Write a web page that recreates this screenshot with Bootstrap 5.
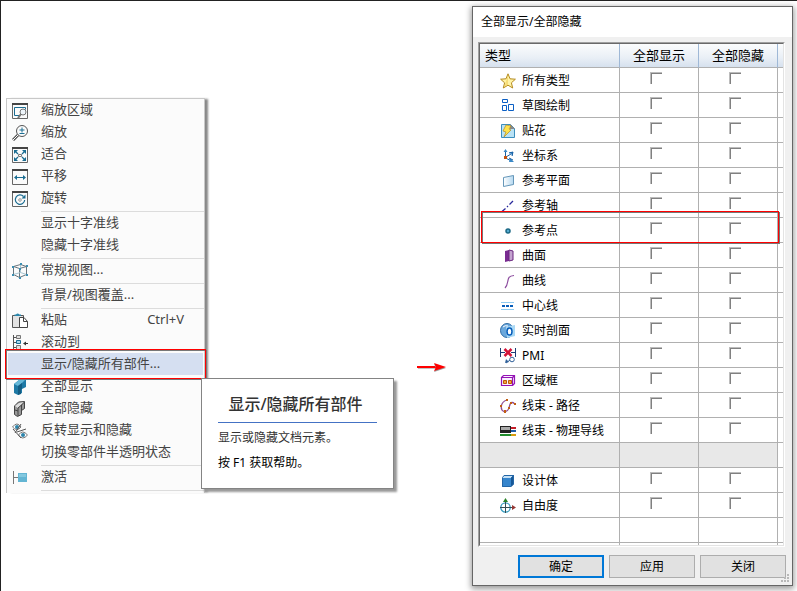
<!DOCTYPE html>
<html lang="zh-CN">
<head>
<meta charset="utf-8">
<meta name="viewport" content="width=device-width, initial-scale=1">
<title>全部显示/全部隐藏</title>
<link rel="stylesheet" href="https://cdn.jsdelivr.net/npm/bootstrap@5.3.0/dist/css/bootstrap.min.css">
<style>
body{font-family:"Noto Sans","Noto Sans CJK SC",sans-serif;font-size:12px;line-height:20px;color:#000;background:#fff;border-top:1px solid #222;border-left:1px solid #222;min-height:100vh}
svg{display:block;flex:none}
.stage{display:grid;grid-template-columns:minmax(199px,199fr) 267fr minmax(321px,321fr);align-items:start;padding:5px 4px 5px 5px}
/* context menu */
.ctx{margin-top:92px;background:#fbfbfb;border:1px solid #c8c8c8;border-bottom:0;padding-bottom:2px;box-shadow:4px 0 2px -1px #888}
.ctx-item{display:flex;align-items:center;width:100%;height:22px;border:0;background:none;padding:0 20px 2px 5px;font-size:13px;line-height:22px;color:#444;text-align:left;white-space:nowrap}
.ctx-item svg{margin-top:3px}
.ctx-icon{width:16px;margin-right:13px;flex:none}
.ctx-sep{height:1px;margin:2px 0 0 34px;background:#dcdcdc}
.ctx-on{background:linear-gradient(#d5dff1,#d5dff1) 1px 0/calc(100% - 2px) 100% no-repeat}
.ctx-on::after,.row-frame td:first-child::after{content:"";position:absolute;border:1px solid #f00;box-shadow:1px 1px 0 #777,inset 1px 1px 0 #777;pointer-events:none}
.ctx-on::after{top:-4px;bottom:-4px;left:-2px;right:-2px}
.tip{position:absolute;z-index:5;left:calc(100% - 3px);top:25px;width:193px;height:111px;background:#fff;border:1px solid #848484;box-shadow:3px 3px 2px #999;padding:11px 16px 0}
.tip-head{font-size:16px;line-height:28px;font-weight:500;color:#333;text-align:center;padding:0 4px 4px 0;border-bottom:1px solid #4472c4;margin:0 0 5px;white-space:nowrap}
.tip p{margin:0 0 5px;line-height:20px;white-space:nowrap}
.tip-text{color:#333}
.flow-arrow{padding:354px 25px 0 0}
/* dialog */
.dlg{background:#f0f0f0;border:1px solid #666;box-shadow:0 2px 6px 1px rgba(0,0,0,.4)}
.dlg-title{height:30px;background:#fff;padding:5px 8px;font-size:12px;line-height:20px;margin:0;font-weight:400}
.well-out{margin:5px 7px 8px 5px;border:1px solid;border-color:#a0a0a0 #fff #fff #a0a0a0}
.well-in{border:1px solid;border-color:#696969 #e3e3e3 #e3e3e3 #696969;background:#fff}
.types{width:100%;table-layout:fixed;border-collapse:separate;border-spacing:0}
.types th,.types td{height:25px;padding:0;border:0 solid #b0b0b0;border-width:0 1px 1px 0}
.types th:last-child,.types td:last-child{border-right:0}
.types th{height:24px;padding-bottom:2px;font-size:13px;line-height:20px;font-weight:400;background:linear-gradient(#fbfcfd,#e9eff6 60%,#d6e1ee);border-right-color:#9fb8d6}
.types th:first-child{padding-left:5px}
.types .kind{display:flex;align-items:center;gap:6px;padding:2px 0 0 20px;height:24px;white-space:nowrap}
.types .blank td:not(:last-child){background:#e8e8e8}
.types .sliver td{height:2px;border-bottom:0}
.c-check{width:79px}.c-end{width:5px}
.types .pick{text-align:center;padding-right:6px;line-height:0;vertical-align:top;padding-top:4px}
.tick{appearance:none;width:12px;height:12px;margin:0;border:0;background:#fff;border-top:1px solid #bcbcbc;border-left:1px solid #bcbcbc;box-shadow:inset 1px 1px 0 #808080;vertical-align:top}
.row-frame{position:relative}
.row-frame td:first-child::after{top:-7px;left:1px;right:4px;bottom:0}
.dlg-foot{position:relative;padding:0 6px 7px;gap:5px}
.dlg-btn{width:86px;height:23px;border:1px solid #adadad;background:#e1e1e1;padding:0;font-size:12px;line-height:20px;color:#000}
.dlg-btn.main-btn{border:2px solid #0078d7;line-height:18px}
.grip{position:absolute;right:3px;bottom:2px}
</style>
<script defer src="https://cdn.jsdelivr.net/npm/bootstrap@5.3.0/dist/js/bootstrap.bundle.min.js"></script>
</head>
<body>
<main class="stage">
<ul class="ctx list-unstyled mb-0">
<li><button class="ctx-item"><span class="ctx-icon"><svg width="16" height="16" viewBox="0 0 16 16" fill="none"><path d="M.5 1v14.500h15V1" stroke="#666"/><path d="M0 1h16" stroke="#444" stroke-width="2"/><path d="M8 12.500H2.500v-8h11v2" stroke="#1b6d92"/><circle cx="11" cy="9" r="3" fill="#eef5fa" stroke="#777"/><path d="m9 11-3 4" stroke="#777" stroke-width="2"/></svg></span>缩放区域</button></li>
<li><button class="ctx-item"><span class="ctx-icon"><svg width="16" height="16" viewBox="0 0 16 16" fill="none"><circle cx="10" cy="6" r="5.500" stroke="#555"/><path d="m6 10-5 5" stroke="#555" stroke-width="3"/><path d="m6 10-5 5" stroke="#fff"/><path d="M10 2.500v5M7.500 5h5M7.500 8.500h5" stroke="#1b6d92"/></svg></span>缩放</button></li>
<li><button class="ctx-item"><span class="ctx-icon"><svg width="16" height="16" viewBox="0 0 16 16" fill="none"><path d="M.5 1v14.500h15V1" stroke="#666"/><path d="M0 1h16" stroke="#444" stroke-width="2"/><path d="m3 4 3 3m7-3-3 3m-7 6 3-3m7 3-3-3" stroke="#1b6d92" stroke-width="1.300"/><path d="M2 3h4L2 7zM14 3v4l-4-4zM2 14v-4l4 4zM14 14h-4l4-4z" fill="#1b6d92"/><path d="M6.500 7.500h3v2h-3z" stroke="#777"/></svg></span>适合</button></li>
<li><button class="ctx-item"><span class="ctx-icon"><svg width="16" height="16" viewBox="0 0 16 16" fill="none"><path d="M.5 1v14.500h15V1" stroke="#666"/><path d="M0 1h16" stroke="#444" stroke-width="2"/><path d="M4 8.500h8" stroke="#1b6d92"/><path d="M2 8.500 5 6v5zM14 8.500 11 6v5z" fill="#1b6d92"/></svg></span>平移</button></li>
<li><button class="ctx-item"><span class="ctx-icon"><svg width="16" height="16" viewBox="0 0 16 16" fill="none"><path d="M.5 1v14.500h15V1" stroke="#666"/><path d="M0 1h16" stroke="#444" stroke-width="2"/><path d="M11.500 5.500A4.700 4.700 0 1 0 12.700 9" stroke="#1b6d92" stroke-width="1.200"/><path d="M13.500 3.500v4H9.500z" fill="#1b6d92"/><circle cx="8" cy="9" r="1.300" stroke="#999"/></svg></span>旋转</button></li>
<li class="ctx-sep"></li>
<li><button class="ctx-item"><span class="ctx-icon"></span>显示十字准线</button></li>
<li><button class="ctx-item"><span class="ctx-icon"></span>隐藏十字准线</button></li>
<li class="ctx-sep"></li>
<li><button class="ctx-item"><span class="ctx-icon"><svg width="16" height="16" viewBox="0 0 16 16" fill="none"><path d="m1.500 3.500 6 2 7-2v8l-7 3-6-3zM7.500 5.500v9M1.500 3.500l7-2 6 2" stroke="#68757d"/><path d="M8.500 1.500v8l-7 2m7-2 6 2" stroke="#a9c6d2"/><path d="M0 3h2v2H0zM8 0h2v2H8zM14 2h2v2h-2zM7 5h2v2H7zM0 11h2v2H0zM7 14h2v2H7zM14 11h2v2h-2z" fill="#3b8db0"/></svg></span>常规视图...</button></li>
<li class="ctx-sep"></li>
<li><button class="ctx-item"><span class="ctx-icon"></span>背景/视图覆盖...</button></li>
<li class="ctx-sep"></li>
<li><button class="ctx-item"><span class="ctx-icon"><svg width="16" height="16" viewBox="0 0 16 16" fill="none"><path d="M.5 2.500h11v12H.5z" fill="#e3e3e3" stroke="#555"/><path d="M2.500 3V1.500H4Q5.500-.5 7.500 1.500H9V3z" fill="#2b86ab"/><path d="M7.500 4.500H12l3.500 4v6h-8z" fill="#fff" stroke="#444"/><path d="M11.500 4.500v4h4" stroke="#444"/></svg></span>粘贴<span class="ms-auto">Ctrl+V</span></button></li>
<li><button class="ctx-item"><span class="ctx-icon"><svg width="16" height="16" viewBox="0 0 16 16" fill="none"><path d="M1.500 0v15M2 2.500h3m-3 5h3m-3 5h3" stroke="#555"/><path d="M4.500.500h4v3h-4zM4.500 10.500h4v4h-4z" fill="#ddd" stroke="#777"/><path d="M4.500 5.500h4v3h-4z" fill="#a8d8ed" stroke="#1b6d92"/><path d="M13 8.500h3" stroke="#333"/><path d="m11 8.500 3-2v4z" fill="#333"/></svg></span>滚动到</button></li>
<li class="ctx-on position-relative"><button class="ctx-item" aria-describedby="tip"><span class="ctx-icon"></span>显示/隐藏所有部件...</button>
<div class="tip" id="tip" role="tooltip"><h2 class="tip-head">显示/隐藏所有部件</h2><p class="tip-text">显示或隐藏文档元素。</p><p>按 F1 获取帮助。</p></div></li>
<li><button class="ctx-item"><span class="ctx-icon"><svg width="16" height="16" viewBox="0 0 16 16"><path d="m2 5 5-4 7-1v8l-4 2v4l-4 2-4-2z" fill="#1e79a5"/><path d="m2 5 5-4 7-1-4 4-4 3z" fill="#65b7d8"/><path d="m6 7 4-3v6l-1 .5V15l-3 1z" fill="#135d83"/></svg></span>全部显示</button></li>
<li><button class="ctx-item"><span class="ctx-icon"><svg width="16" height="16" viewBox="0 0 16 16"><path d="m2.500 5 4-4 6-.5v7l-3 2v4l-4 2-3-2z" fill="#999" stroke="#444"/><path d="m3 5 4-3 5-1-3 3-3 3z" fill="#ddd"/><path d="M6 7v8M6 7l3.500-3v6M3 9l3 1M9.500 4l3-3" stroke="#444" fill="none"/></svg></span>全部隐藏</button></li>
<li><button class="ctx-item"><span class="ctx-icon"><svg width="16" height="16" viewBox="0 0 16 16" fill="none"><path d="M.5 4Q5-2 9 4 5 9 .5 4zM6.500 12q4-6 9 0-5 6-9 0z" fill="#fff" stroke="#777"/><circle cx="5" cy="4" r="2" fill="#2d84aa"/><circle cx="11" cy="12" r="2" fill="#2d84aa"/><path d="m9 1-6 9m2-1 9-3M1 6l8 9" stroke="#555"/></svg></span>反转显示和隐藏</button></li>
<li><button class="ctx-item"><span class="ctx-icon"></span>切换零部件半透明状态</button></li>
<li class="ctx-sep"></li>
<li><button class="ctx-item"><span class="ctx-icon"><svg width="16" height="16" viewBox="0 0 16 16"><path d="M1.500 1v13M2 7.500h4" stroke="#777"/><path d="M6 3h9v9H6z" fill="#63b5d3"/><path d="M7 4h7v3H7z" fill="#83c8df"/></svg></span>激活</button></li>
<li class="ctx-sep"></li>
</ul>
<div class="flow-arrow d-flex justify-content-end"><svg width="30" height="14" viewBox="0 0 30 14"><path d="M1 8h20" stroke="#888"/><path d="M0 7h20" stroke="#f00" stroke-width="2"/><path d="m17 4 12 4-12 4 2-4z" fill="#999"/><path d="m17 3 12 4-12 4 2-4z" fill="#f00"/></svg></div>
<section class="dlg">
<h1 class="dlg-title">全部显示/全部隐藏</h1>
<div class="well-out"><div class="well-in">
<table class="types">
<colgroup><col><col class="c-check"><col class="c-check"><col class="c-end"></colgroup>
<thead><tr><th>类型</th><th class="text-center">全部显示</th><th class="text-center">全部隐藏</th><th></th></tr></thead>
<tbody>
<tr><td><div class="kind"><svg width="16" height="16" viewBox="0 0 16 16"><path d="m8 .8 2 5 5.400.4-4 3.600 1.300 5.200L8 12.200 3.300 15l1.300-5.200-4-3.600L6 5.800z" fill="#fff3a6" stroke="#b58b20"/><path d="M8 2v10l-4 2 1.500-4z" fill="#f0cf5c" opacity=".6"/></svg>所有类型</div></td><td class="pick"><input type="checkbox" class="tick" aria-label="所有类型 全部显示"></td><td class="pick"><input type="checkbox" class="tick" aria-label="所有类型 全部隐藏"></td><td></td></tr>
<tr><td><div class="kind"><svg width="16" height="16" viewBox="0 0 16 16" fill="none" stroke="#0b5fc4"><path d="M2.500 1.500h5v3h-5zM2.500 7.500h4v5h-4zM8.500 6.500h5v6h-5z"/></svg>草图绘制</div></td><td class="pick"><input type="checkbox" class="tick" aria-label="草图绘制 全部显示"></td><td class="pick"><input type="checkbox" class="tick" aria-label="草图绘制 全部隐藏"></td><td></td></tr>
<tr><td><div class="kind"><svg width="16" height="16" viewBox="0 0 16 16"><path d="M1.500 1.500h9l4 4v9h-13z" fill="#b9e2f5" stroke="#3c8ebd"/><path d="M10 1v5h5z" fill="#888"/><path d="m6 2 5 1-2 3 2 1-7 7 2-5-3-1z" fill="#ffe34b" stroke="#b58b20" stroke-width=".7"/></svg>贴花</div></td><td class="pick"><input type="checkbox" class="tick" aria-label="贴花 全部显示"></td><td class="pick"><input type="checkbox" class="tick" aria-label="贴花 全部隐藏"></td><td></td></tr>
<tr><td><div class="kind"><svg width="16" height="16" viewBox="0 0 16 16" fill="none"><path d="M5.500 3v7l6 3M6 9l5-3" stroke="#1b62a5"/><path d="m5.500 1 2 3h-4zM10 10l4 4H9zM9 4h4v4z" fill="#3a88c6"/><path d="m9 5 4-1-1 4m-3 2 4 2" stroke="#1b62a5"/><path d="M4 8h3v3H4z" fill="#c3520f"/></svg>坐标系</div></td><td class="pick"><input type="checkbox" class="tick" aria-label="坐标系 全部显示"></td><td class="pick"><input type="checkbox" class="tick" aria-label="坐标系 全部隐藏"></td><td></td></tr>
<tr><td><div class="kind"><svg width="16" height="16" viewBox="0 0 16 16"><defs><linearGradient id="gp"><stop stop-color="#fff"/><stop offset="1" stop-color="#b5d8f0"/></linearGradient></defs><path d="m3.500 4.500 10-2v9l-10 2z" fill="url(#gp)" stroke="#6597b9"/></svg>参考平面</div></td><td class="pick"><input type="checkbox" class="tick" aria-label="参考平面 全部显示"></td><td class="pick"><input type="checkbox" class="tick" aria-label="参考平面 全部隐藏"></td><td></td></tr>
<tr><td><div class="kind"><svg width="16" height="16" viewBox="0 0 16 16"><path d="m2 13.500 3.500-3M7 9l1-1m1.500-1.500L13 3" stroke="#28289b" stroke-width="1.300"/></svg>参考轴</div></td><td class="pick"><input type="checkbox" class="tick" aria-label="参考轴 全部显示"></td><td class="pick"><input type="checkbox" class="tick" aria-label="参考轴 全部隐藏"></td><td></td></tr>
<tr class="row-frame"><td><div class="kind"><svg width="16" height="16" viewBox="0 0 16 16"><circle cx="8" cy="8" r="2" fill="#55acd0" stroke="#1b6885" stroke-width="1.500"/></svg>参考点</div></td><td class="pick"><input type="checkbox" class="tick" aria-label="参考点 全部显示"></td><td class="pick"><input type="checkbox" class="tick" aria-label="参考点 全部隐藏"></td><td></td></tr>
<tr><td><div class="kind"><svg width="16" height="16" viewBox="0 0 16 16"><path d="m5 3 4-1v11l-4 1z" fill="#792b91"/><path d="m9 2 4 1v9l-4 1z" fill="#c4a4d0" stroke="#6b267f"/></svg>曲面</div></td><td class="pick"><input type="checkbox" class="tick" aria-label="曲面 全部显示"></td><td class="pick"><input type="checkbox" class="tick" aria-label="曲面 全部隐藏"></td><td></td></tr>
<tr><td><div class="kind"><svg width="16" height="16" viewBox="0 0 16 16"><path d="M5 15c5-5 0-12 9-12.500" fill="none" stroke="#8b4a9d" stroke-width="1.200"/></svg>曲线</div></td><td class="pick"><input type="checkbox" class="tick" aria-label="曲线 全部显示"></td><td class="pick"><input type="checkbox" class="tick" aria-label="曲线 全部隐藏"></td><td></td></tr>
<tr><td><div class="kind"><svg width="16" height="16" viewBox="0 0 16 16"><path d="M1 4.500h13M1 11.500h13" stroke="#8fcaf0"/><path d="M2 8h3m1 0h3m1 0h3" stroke="#075dba" stroke-width="2"/></svg>中心线</div></td><td class="pick"><input type="checkbox" class="tick" aria-label="中心线 全部显示"></td><td class="pick"><input type="checkbox" class="tick" aria-label="中心线 全部隐藏"></td><td></td></tr>
<tr><td><div class="kind"><svg width="16" height="16" viewBox="0 0 16 16"><ellipse cx="7" cy="7.500" rx="6.500" ry="7" fill="#6ba8dc" stroke="#326da5"/><path d="m6 4 9-2v11l-8 2z" fill="#a9d8f5"/><ellipse cx="9.500" cy="8.500" rx="2.500" ry="3.500" fill="#fff" stroke="#075dba" stroke-width="1.500"/><path d="M3 4q2-2 5-1" stroke="#fff" fill="none"/></svg>实时剖面</div></td><td class="pick"><input type="checkbox" class="tick" aria-label="实时剖面 全部显示"></td><td class="pick"><input type="checkbox" class="tick" aria-label="实时剖面 全部隐藏"></td><td></td></tr>
<tr><td><div class="kind"><svg width="16" height="16" viewBox="0 0 16 16" fill="none"><path d="M.5 0v9m15-9v9M0 4.500h5m6 0h5" stroke="#1c3b75"/><path d="m4.500 1 7 7m0-7-7 7" stroke="#d31338" stroke-width="2.500"/><circle cx="12" cy="11.500" r="2.300" stroke="#31619a"/><path d="m10 12-4 3" stroke="#31619a"/><path d="m5 15 1-4 3 3z" fill="#31619a"/></svg>PMI</div></td><td class="pick"><input type="checkbox" class="tick" aria-label="PMI 全部显示"></td><td class="pick"><input type="checkbox" class="tick" aria-label="PMI 全部隐藏"></td><td></td></tr>
<tr><td><div class="kind"><svg width="16" height="16" viewBox="0 0 16 16"><path d="M1.500 4.500h11v8h-11zM1.500 4.500l2-2h11v8l-2 2m0-8 2-2" fill="#faf0ff" stroke="#9413b5" stroke-width="1.200"/><path d="M3.500 7.500h3v3h-3zm5 0h3v3h-3z" fill="#f5a63b" stroke="#bc5908"/></svg>区域框</div></td><td class="pick"><input type="checkbox" class="tick" aria-label="区域框 全部显示"></td><td class="pick"><input type="checkbox" class="tick" aria-label="区域框 全部隐藏"></td><td></td></tr>
<tr><td><div class="kind"><svg width="16" height="16" viewBox="0 0 16 16"><path d="M7 2C0 4 0 12 4 13.500c7 1 4-9 8-9 2 0 2 1 3 2" fill="none" stroke="#8f4b93" stroke-width="1.300"/><path d="M6 1h2v2H6zM0 7h2v2H0zM4 12h2v3H4zM8 9h2v2H8zM10 4h2v2h-2zM14 5h2v2h-2z" fill="#c15e13"/></svg>线束 - 路径</div></td><td class="pick"><input type="checkbox" class="tick" aria-label="线束 - 路径 全部显示"></td><td class="pick"><input type="checkbox" class="tick" aria-label="线束 - 路径 全部隐藏"></td><td></td></tr>
<tr><td><div class="kind"><svg width="16" height="16" viewBox="0 0 16 16"><path d="M0 3h11v7H0z" fill="#222"/><path d="M1 4h9v3H1z" fill="#aaa"/><path d="M11 5h5" stroke="#c41c28" stroke-width="2"/><path d="M11 8h5" stroke="#1c5ca8" stroke-width="2"/><path d="M0 12h11" stroke="#218d2e" stroke-width="2"/><path d="M11 12h5" stroke="#d69b0e" stroke-width="2"/></svg>线束 - 物理导线</div></td><td class="pick"><input type="checkbox" class="tick" aria-label="线束 - 物理导线 全部显示"></td><td class="pick"><input type="checkbox" class="tick" aria-label="线束 - 物理导线 全部隐藏"></td><td></td></tr>
<tr class="blank"><td></td><td></td><td></td><td></td></tr>
<tr><td><div class="kind"><svg width="16" height="16" viewBox="0 0 16 16"><path d="M2 5h9v9H2z" fill="#3685cc"/><path d="m2 5 2-3h10l-3 3z" fill="#c5e1f6"/><path d="m11 5 3-3v9l-3 3z" fill="#165796"/><path d="M2.500 4.500 4 2.500h9.500V11L11 13.500h-8.500zM11 5l3-3" fill="none" stroke="#2466a6"/></svg>设计体</div></td><td class="pick"><input type="checkbox" class="tick" aria-label="设计体 全部显示"></td><td class="pick"><input type="checkbox" class="tick" aria-label="设计体 全部隐藏"></td><td></td></tr>
<tr><td><div class="kind"><svg width="16" height="16" viewBox="0 0 16 16"><circle cx="5.500" cy="9.500" r="4.700" fill="none" stroke="#319bbf" stroke-width="1.300"/><path d="M5.500 3v12M0 9.500h13" stroke="#354d54"/><path d="m5.500 0 2.500 4H3z" fill="#278126"/><path d="m16 9.500-4-2.500v5z" fill="#963734"/></svg>自由度</div></td><td class="pick"><input type="checkbox" class="tick" aria-label="自由度 全部显示"></td><td class="pick"><input type="checkbox" class="tick" aria-label="自由度 全部隐藏"></td><td></td></tr>
<tr><td></td><td></td><td></td><td></td></tr>
<tr class="sliver"><td></td><td></td><td></td><td></td></tr>
</tbody></table></div></div>
<div class="dlg-foot d-flex justify-content-end"><button class="dlg-btn main-btn">确定</button><button class="dlg-btn">应用</button><button class="dlg-btn">关闭</button>
<svg class="grip" width="9" height="9" viewBox="0 0 9 9"><path d="M7 0h2v2H7zM7 3h2v2H7zM7 6h2v2H7zM4 3h2v2H4zM4 6h2v2H4zM1 6h2v2H1z" fill="#b8b8b8"/></svg></div>
</section>
</main>
</body>
</html>
